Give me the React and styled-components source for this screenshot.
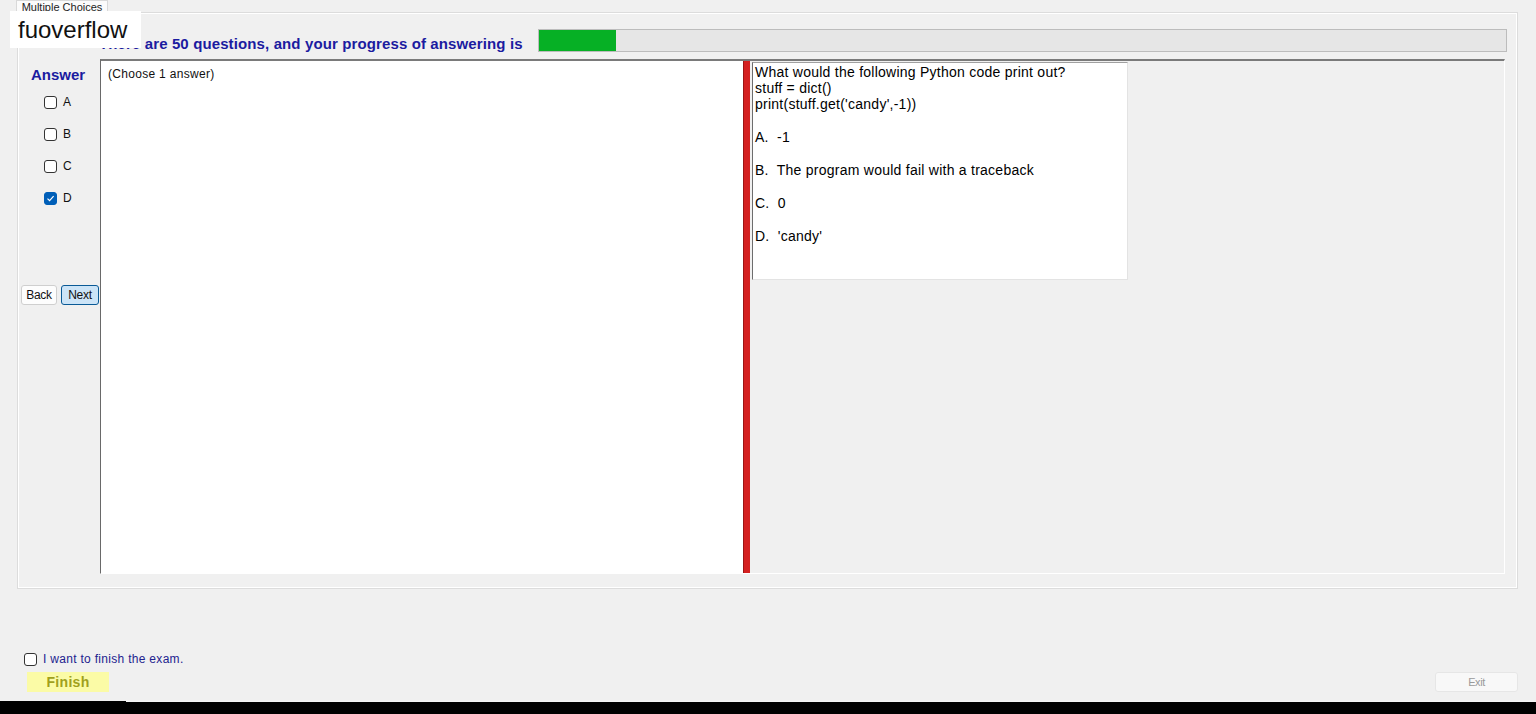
import React from 'react';
import styled, { createGlobalStyle } from 'styled-components';

const GlobalStyle = createGlobalStyle`
  html, body {
    margin: 0;
    padding: 0;
    background: #f0f0f0;
  }
  body {
    font-family: "Liberation Sans", Arial, sans-serif;
  }
`;

const Page = styled.div`
  position: relative;
  width: 1536px;
  height: 714px;
  display: flex;
  flex-direction: column;
  overflow: hidden;
  background: #f0f0f0;
`;

const Watermark = styled.div`
  position: absolute;
  top: 11px;
  left: 10px;
  width: 131px;
  height: 37px;
  box-sizing: border-box;
  padding-left: 8px;
  background: #ffffff;
  color: #111;
  font-size: 24px;
  line-height: 37px;
`;

const TabStrip = styled.div`
  display: flex;
  height: 12px;
  padding-left: 16px;
`;

const Tab = styled.div`
  width: 92px;
  height: 12px;
  box-sizing: border-box;
  border: 1px solid #d9d9d9;
  border-bottom: none;
  background: #fbfbfb;
  color: #222;
  font-size: 11px;
  line-height: 12px;
  text-align: center;
  overflow: hidden;
  white-space: nowrap;
`;

const TabPanel = styled.div`
  margin: 0 18px 0 17px;
  height: 577px;
  box-sizing: border-box;
  border: 1px solid #dcdcdc;
  box-shadow: inset 1px 1px 0 #ffffff, inset -1px -1px 0 #ffffff;
  display: flex;
  flex-direction: column;
`;

const Header = styled.div`
  display: flex;
  align-items: flex-start;
  height: 46px;
  box-sizing: border-box;
  padding: 16px 10px 0 81px;
`;

const HeaderText = styled.div`
  width: 439px;
  margin-top: 6px;
  color: #1b1ba0;
  font-size: 15px;
  font-weight: bold;
  line-height: 17px;
  letter-spacing: 0.12px;
  white-space: nowrap;
`;

const ProgressTrack = styled.div`
  flex: 1;
  height: 23px;
  box-sizing: border-box;
  border: 1px solid #bcbcbc;
  background: #e6e6e6;
`;

const ProgressFill = styled.div`
  height: 100%;
  background: #06b025;
`;

const Body = styled.div`
  display: flex;
  height: 515px;
`;

const Sidebar = styled.div`
  width: 82px;
  display: flex;
  flex-direction: column;
  padding-top: 8px;
  box-sizing: border-box;
`;

const AnswerTitle = styled.div`
  margin-left: 13px;
  color: #1b1ba0;
  font-size: 15px;
  font-weight: bold;
  line-height: 16px;
`;

const OptionList = styled.div`
  margin-top: 3px;
  display: flex;
  flex-direction: column;
`;

const OptionRow = styled.label`
  display: flex;
  align-items: center;
  gap: 6px;
  height: 32px;
  padding-left: 26px;
  color: #111;
  font-size: 12px;
`;

const Box = styled.span`
  display: inline-flex;
  align-items: center;
  justify-content: center;
  width: 13px;
  height: 13px;
  box-sizing: border-box;
  border-radius: 3px;
  border: 1px solid ${(p) => (p.$checked ? '#005fb8' : '#333333')};
  background: ${(p) => (p.$checked ? '#005fb8' : '#ffffff')};
`;

const NavRow = styled.div`
  display: flex;
  gap: 4px;
  margin-top: 71px;
  padding-left: 3px;
`;

const NavButton = styled.button`
  width: ${(p) => p.$width}px;
  height: 20px;
  padding: 0;
  box-sizing: border-box;
  border-radius: 3px;
  border: 1px solid ${(p) => (p.$primary ? '#0a5a96' : '#cfcfcf')};
  background: ${(p) => (p.$primary ? '#cce4f7' : '#fdfdfd')};
  color: #111;
  font-family: "Liberation Sans", Arial, sans-serif;
  font-size: 12px;
  letter-spacing: -0.3px;
`;

const Content = styled.div`
  width: 1405px;
  display: flex;
  box-sizing: border-box;
  border-top: 2px solid #7a7a7a;
  border-left: 1px solid #696969;
  border-bottom: 1px solid #ffffff;
  border-right: 1px solid #ffffff;
`;

const LeftPane = styled.div`
  width: 642px;
  background: #ffffff;
  padding: 6px 7px;
  box-sizing: border-box;
  color: #111;
  font-size: 12px;
  line-height: 14px;
  letter-spacing: 0.3px;
`;

const Splitter = styled.div`
  width: 7px;
  box-sizing: border-box;
  border-left: 1px solid #9c1414;
  background: #d42020;
`;

const RightPane = styled.div`
  flex: 1;
  padding: 1px 0 0 2px;
`;

const QuestionBox = styled.div`
  width: 376px;
  height: 218px;
  box-sizing: border-box;
  padding: 1px 2px;
  background: #ffffff;
  border-top: 1px solid #a0a0a0;
  border-left: 1px solid #6d6d6d;
  border-right: 1px solid #e3e3e3;
  border-bottom: 1px solid #e3e3e3;
  color: #000;
  font-size: 14px;
  line-height: 16px;
  letter-spacing: 0.25px;
`;

const Line = styled.div`
  white-space: pre;
`;

const Choice = styled(Line)`
  margin-top: 17px;
`;

const Footer = styled.div`
  flex: 1;
  display: flex;
  justify-content: space-between;
  align-items: flex-end;
  padding: 0 18px 9px 24px;
`;

const FinishGroup = styled.div`
  display: flex;
  flex-direction: column;
`;

const FinishCheck = styled.label`
  display: flex;
  align-items: center;
  gap: 6px;
  height: 14px;
  color: #23238f;
  font-size: 12px;
  letter-spacing: 0.3px;
`;

const FinishButton = styled.button`
  margin: 6px 0 0 3px;
  width: 82px;
  height: 20px;
  padding: 0;
  border: none;
  background: #fbfba6;
  color: #a0a01c;
  font-family: "Liberation Sans", Arial, sans-serif;
  font-size: 14px;
  font-weight: bold;
  letter-spacing: 0.3px;
`;

const ExitButton = styled.button`
  width: 83px;
  height: 20px;
  padding: 0;
  box-sizing: border-box;
  border: 1px solid #e6e6e6;
  border-radius: 3px;
  background: #f8f8f8;
  color: #9a9a9a;
  font-family: "Liberation Sans", Arial, sans-serif;
  font-size: 11px;
  letter-spacing: -0.4px;
`;

const Taskbar = styled.div`
  height: 13px;
  background: #000000;
`;

const TaskbarEdge = styled.div`
  margin-left: 126px;
  height: 1px;
  background: #f4f4f4;
`;

const CheckBox = ({ checked }) => (
  <Box $checked={checked}>
    {checked && (
      <svg width="9" height="9" viewBox="0 0 9 9">
        <path d="M1.5 4.6 L3.6 6.6 L7.6 2.2" fill="none" stroke="#ffffff" strokeWidth="1.2" />
      </svg>
    )}
  </Box>
);

const options = [
  { key: 'A', checked: false },
  { key: 'B', checked: false },
  { key: 'C', checked: false },
  { key: 'D', checked: true },
];

const choices = ['A.  -1', 'B.  The program would fail with a traceback', 'C.  0', "D.  'candy'"];

const answered = 4;
const total = 50;

const App = () => {
  const pct = (answered / total) * 100;
  return (
    <Page>
      <GlobalStyle />
      <TabStrip>
        <Tab>Multiple Choices</Tab>
      </TabStrip>
      <TabPanel>
        <Header>
          <HeaderText>There are {total} questions, and your progress of answering is</HeaderText>
          <ProgressTrack>
            <ProgressFill style={{ width: `${pct}%` }} />
          </ProgressTrack>
        </Header>
        <Body>
          <Sidebar>
            <AnswerTitle>Answer</AnswerTitle>
            <OptionList>
              {options.map((o) => (
                <OptionRow key={o.key}>
                  <CheckBox checked={o.checked} />
                  {o.key}
                </OptionRow>
              ))}
            </OptionList>
            <NavRow>
              <NavButton $width={36}>Back</NavButton>
              <NavButton $width={38} $primary>
                Next
              </NavButton>
            </NavRow>
          </Sidebar>
          <Content>
            <LeftPane>(Choose 1 answer)</LeftPane>
            <Splitter />
            <RightPane>
              <QuestionBox>
                <Line>What would the following Python code print out?</Line>
                <Line>stuff = dict()</Line>
                <Line>print(stuff.get('candy',-1))</Line>
                {choices.map((c) => (
                  <Choice key={c}>{c}</Choice>
                ))}
              </QuestionBox>
            </RightPane>
          </Content>
        </Body>
      </TabPanel>
      <Footer>
        <FinishGroup>
          <FinishCheck>
            <CheckBox checked={false} />
            I want to finish the exam.
          </FinishCheck>
          <FinishButton>Finish</FinishButton>
        </FinishGroup>
        <ExitButton>Exit</ExitButton>
      </Footer>
      <Taskbar>
        <TaskbarEdge />
      </Taskbar>
      <Watermark>fuoverflow</Watermark>
    </Page>
  );
};

export default App;
